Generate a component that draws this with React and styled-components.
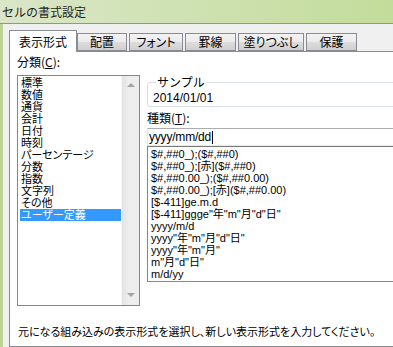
import React from 'react';
import styled, { createGlobalStyle } from 'styled-components';

const GlobalStyle = createGlobalStyle`
  html, body {
    margin: 0;
    padding: 0;
    overflow: hidden;
  }
  body {
    font-family: "Liberation Sans", "Noto Sans CJK JP", sans-serif;
    font-size: 12px;
    color: #000;
  }
`;

const Window = styled.div`
  width: 393px;
  height: 347px;
  display: flex;
  flex-direction: column;
  background: #f0f0f0;
  overflow: hidden;
`;

const TitleBar = styled.div`
  flex: none;
  height: 23px;
  padding-left: 2px;
  display: flex;
  align-items: center;
  border-bottom: 1px solid #8d9c80;
  background: linear-gradient(90deg, #dae6c8 0%, #cfe2b3 45%, #c3dc9b 100%);
  color: #1e1e1e;
  font-family: "Noto Sans CJK JP", sans-serif;
  font-size: 12px;
`;

const Frame = styled.div`
  flex: 1;
  display: flex;
  min-height: 0;
  border-left: 3px solid #bcd396;
`;

const Content = styled.div`
  flex: 1;
  min-width: 0;
  display: flex;
  flex-direction: column;
  padding: 6px 0 0 6px;
`;

const TabRow = styled.div`
  display: flex;
  align-items: flex-end;
  height: 21px;
  position: relative;
  z-index: 1;
`;

const Tab = styled.div`
  box-sizing: border-box;
  width: ${(p) => p.$w}px;
  height: ${(p) => (p.$active ? 22 : 18)}px;
  margin-left: ${(p) => p.$gap || 0}px;
  margin-bottom: ${(p) => (p.$active ? -1 : 0)}px;
  display: flex;
  align-items: center;
  justify-content: center;
  border: 1px solid #898c95;
  border-bottom: ${(p) => (p.$active ? 'none' : '1px solid #898c95')};
  background: ${(p) =>
    p.$active ? '#fff' : 'linear-gradient(180deg, #f3f3f3 0%, #ebebeb 50%, #dddddd 51%, #cfcfcf 100%)'};
  font-family: "Noto Sans CJK JP", sans-serif;
  font-feature-settings: "palt";
  font-size: 12px;
  line-height: 14px;
  padding-top: ${(p) => (p.$active ? 1 : 0)}px;
`;

const Panel = styled.div`
  flex: 1;
  margin-right: -30px;
  background: #fff;
  border: 1px solid #898c95;
  padding: 3px 0 0 7px;
  display: flex;
  flex-direction: column;
`;

const Columns = styled.div`
  display: grid;
  grid-template-columns: 123px 1fr;
  column-gap: 7px;
`;

const Column = styled.div`
  display: flex;
  flex-direction: column;
  min-width: 0;
  padding-top: ${(p) => p.$top || 0}px;
`;

const Label = styled.div`
  height: 14px;
  line-height: 14px;
  margin-bottom: ${(p) => p.$after || 0}px;
  margin-top: ${(p) => p.$before || 0}px;
  font-family: "Noto Sans CJK JP", sans-serif;
  font-size: 12px;
  white-space: nowrap;

  u {
    text-underline-offset: 1px;
  }
`;

const ListBox = styled.div`
  box-sizing: border-box;
  height: 231px;
  display: flex;
  border: 1px solid #828790;
`;

const Items = styled.div`
  flex: 1;
  padding: 1px 0 0 2px;
`;

const Item = styled.div`
  height: 12px;
  line-height: 12px;
  padding-left: 1px;
  white-space: nowrap;
  font-family: "Liberation Sans", "Noto Sans CJK JP", sans-serif;
  font-feature-settings: "palt";
  font-size: 11px;
  background: ${(p) => (p.$selected ? '#3399ff' : 'transparent')};
  color: ${(p) => (p.$selected ? '#fff' : '#000')};
`;

const ScrollBar = styled.div`
  width: 17px;
  display: flex;
  flex-direction: column;
  justify-content: space-between;
  align-items: center;
  padding: 7px 0 8px;
  background: linear-gradient(90deg, #e3e3e3 0%, #eeeeee 40%, #ededed 100%);
  border-left: 1px solid #f7f7f7;
`;

const Arrow = styled.div`
  width: 0;
  height: 0;
  border-left: 4px solid transparent;
  border-right: 4px solid transparent;
  ${(p) => (p.$down ? 'border-top: 4px solid #a3a3a3;' : 'border-bottom: 4px solid #a3a3a3;')}
`;

const GroupBox = styled.fieldset`
  margin: 0;
  padding: 2px 0 1px 5px;
  border: 1px solid #d5dfe5;
  border-radius: 3px;
  min-width: 0;
`;

const Legend = styled.legend`
  padding: 0 1px;
  margin-left: 3px;
  line-height: 14px;
  font-family: "Noto Sans CJK JP", sans-serif;
  font-size: 12px;
`;

const SampleText = styled.div`
  height: 14px;
  line-height: 14px;
  font-size: 12px;
`;

const Input = styled.div`
  box-sizing: border-box;
  height: 18px;
  margin-top: 3px;
  padding-left: 1px;
  display: flex;
  align-items: center;
  border: 1px solid #e3e9ef;
  border-top-color: #abadb3;
  border-left-color: #e2e3ea;
  font-size: 12px;
  letter-spacing: -0.2px;
`;

const Caret = styled.span`
  display: inline-block;
  width: 1px;
  height: 13px;
  margin-left: 1px;
  background: #000;
`;

const FormatList = styled.div`
  box-sizing: border-box;
  height: 136px;
  padding: 1px 0 0 3px;
  border: 1px solid #828790;
  border-top-color: #7a7a7a;
`;

const FormatItem = styled.div`
  height: 12px;
  line-height: 12px;
  white-space: nowrap;
  font-family: "Liberation Sans", "Noto Sans CJK JP", sans-serif;
  font-size: 11px;
`;

const Description = styled.div`
  margin-top: 18px;
  padding-left: 1px;
  line-height: 14px;
  font-family: "Noto Sans CJK JP", sans-serif;
  font-feature-settings: "palt";
  font-size: 11px;
  white-space: nowrap;
`;

const tabs = [
  { label: '表示形式', w: 68, active: true },
  { label: '配置', w: 50, gap: 0 },
  { label: 'フォント', w: 54, gap: 2 },
  { label: '罫線', w: 51, gap: 2 },
  { label: '塗りつぶし', w: 66, gap: 2 },
  { label: '保護', w: 51, gap: 2 },
];

const categories = [
  '標準',
  '数値',
  '通貨',
  '会計',
  '日付',
  '時刻',
  'パーセンテージ',
  '分数',
  '指数',
  '文字列',
  'その他',
  'ユーザー定義',
];

const formats = [
  '$#,##0_);($#,##0)',
  '$#,##0_);[赤]($#,##0)',
  '$#,##0.00_);($#,##0.00)',
  '$#,##0.00_);[赤]($#,##0.00)',
  '[$-411]ge.m.d',
  '[$-411]ggge"年"m"月"d"日"',
  'yyyy/m/d',
  'yyyy"年"m"月"d"日"',
  'yyyy"年"m"月"',
  'm"月"d"日"',
  'm/d/yy',
];

export default function App() {
  return (
    <>
      <GlobalStyle />
      <Window>
        <TitleBar>セルの書式設定</TitleBar>
        <Frame>
          <Content>
            <TabRow>
              {tabs.map((t) => (
                <Tab key={t.label} $w={t.w} $gap={t.gap} $active={t.active}>
                  {t.label}
                </Tab>
              ))}
            </TabRow>
            <Panel>
              <Columns>
                <Column>
                  <Label $after={6}>
                    分類(<u>C</u>):
                  </Label>
                  <ListBox>
                    <Items>
                      {categories.map((c) => (
                        <Item key={c} $selected={c === 'ユーザー定義'}>
                          {c}
                        </Item>
                      ))}
                    </Items>
                    <ScrollBar>
                      <Arrow />
                      <Arrow $down />
                    </ScrollBar>
                  </ListBox>
                </Column>
                <Column $top={20}>
                  <GroupBox>
                    <Legend>サンプル</Legend>
                    <SampleText>2014/01/01</SampleText>
                  </GroupBox>
                  <Label $before={4}>
                    種類(<u>T</u>):
                  </Label>
                  <Input>
                    yyyy/mm/dd
                    <Caret />
                  </Input>
                  <FormatList>
                    {formats.map((f) => (
                      <FormatItem key={f}>{f}</FormatItem>
                    ))}
                  </FormatList>
                </Column>
              </Columns>
              <Description>
                元になる組み込みの表示形式を選択し、新しい表示形式を入力してください。
              </Description>
            </Panel>
          </Content>
        </Frame>
      </Window>
    </>
  );
}
